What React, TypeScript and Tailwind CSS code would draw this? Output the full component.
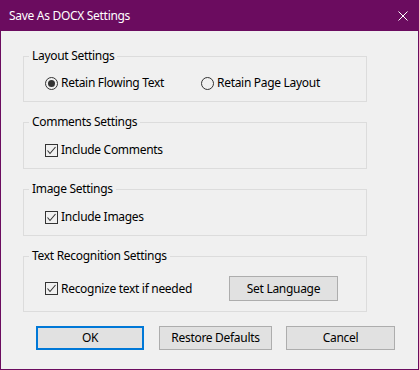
import React from 'react';

const Radio = ({ checked, label, className }: { checked?: boolean; label: string; className?: string }) => (
    <label className={`flex items-center gap-[3px] ${className ?? ''}`}>
        <span className="w-[13px] h-[13px] rounded-full border border-[#333333] flex items-center justify-center bg-transparent">
            {checked && <span className="w-[7px] h-[7px] rounded-full bg-[#333333]" />}
        </span>
        <span>{label}</span>
    </label>
);

const Check = ({ label, className }: { label: string; className?: string }) => (
    <label className={`flex items-center gap-[3px] ${className ?? ''}`}>
        <svg width="13" height="13" viewBox="0 0 13 13" className="shrink-0">
            <rect x="0.5" y="0.5" width="12" height="12" fill="none" stroke="#333333" />
            <polyline points="2.5,6.5 5,9.5 10.5,3" fill="none" stroke="#333333" strokeWidth="1.1" />
        </svg>
        <span>{label}</span>
    </label>
);

const Group = ({ title, children, className }: { title: string; children: React.ReactNode; className?: string }) => (
    <fieldset className={`w-[344px] border border-[#dcdcdc] pb-[10px] ${className ?? ''}`}>
        <legend className="ml-[5px] px-[3px] leading-[16px]">{title}</legend>
        <div className="pl-[21px]">{children}</div>
    </fieldset>
);

export default function App() {
    return (
        <div className="w-[419px] h-[370px] flex flex-col text-[12px] tracking-[-0.3px] text-black font-['Noto_Sans',sans-serif]">
            <div className="h-[31px] shrink-0 bg-[#6b0c5f] flex items-center justify-between pl-[9px] pr-[11px] text-white">
                <span>Save As DOCX Settings</span>
                <svg width="10" height="10" viewBox="0 0 10 10">
                    <path d="M0.5 0.5 L9.5 9.5 M9.5 0.5 L0.5 9.5" stroke="#ffffff" strokeWidth="1" />
                </svg>
            </div>

            <div className="flex-1 bg-[#f0f0f0] border-x border-b border-[#6b0c5f] pt-[17px] pl-[22px] flex flex-col gap-[12px]">
                <Group title="Layout Settings" className="pt-[11px]">
                    <div className="flex items-center h-[16px] leading-[16px]">
                        <Radio checked label="Retain Flowing Text" className="w-[156px]" />
                        <Radio label="Retain Page Layout" />
                    </div>
                </Group>

                <Group title="Comments Settings" className="pt-[12px]">
                    <div className="flex items-center h-[16px] leading-[16px]">
                        <Check label="Include Comments" />
                    </div>
                </Group>

                <Group title="Image Settings" className="pt-[12px]">
                    <div className="flex items-center h-[16px] leading-[16px]">
                        <Check label="Include Images" />
                    </div>
                </Group>

                <Group title="Text Recognition Settings" className="pt-[12px]">
                    <div className="flex items-center h-[25px]">
                        <Check label="Recognize text if needed" className="w-[184px]" />
                        <button className="w-[109px] h-[25px] bg-[#e1e1e1] border border-[#adadad]">Set Language</button>
                    </div>
                </Group>

                <div className="flex items-center pl-[13px] mt-[2px]">
                    <button className="w-[108px] h-[24px] bg-[#e1e1e1] border-2 border-[#0078d7]">OK</button>
                    <button className="w-[113px] h-[24px] ml-[15px] bg-[#e1e1e1] border border-[#adadad]">Restore Defaults</button>
                    <button className="w-[109px] h-[24px] ml-[14px] bg-[#e1e1e1] border border-[#adadad]">Cancel</button>
                </div>
            </div>
        </div>
    );
}
